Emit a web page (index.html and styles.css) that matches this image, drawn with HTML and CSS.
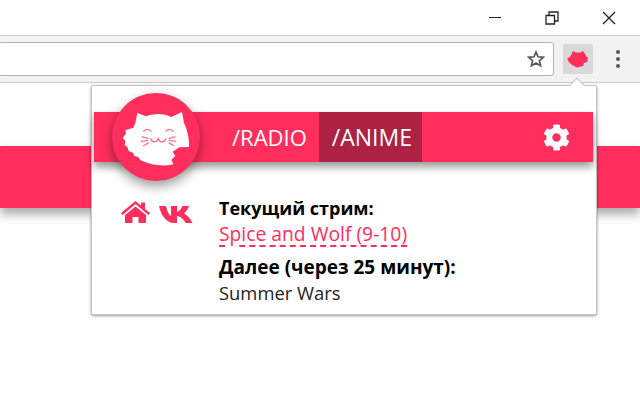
FILE: index.html
```html
<!DOCTYPE html>
<html>
  <head>
    <meta charset="utf-8">
    <title>Anime Radio</title>
    <link rel="stylesheet" href="styles.css">
  </head>
  <body>
    <div class="titlebar">
      <span class="win-min"></span>
      <svg class="win-icon" width="14" height="14" viewBox="0 0 14 14"><path d="M1 4.500h8.500v8.500h-8.500zM4 4.500v-3.500h9v9h-3.500" fill="none" stroke="#222" stroke-width="1.300"/></svg>
      <svg class="win-icon win-close" width="14" height="14" viewBox="0 0 14 14"><path d="M1 1l12 12M13 1l-12 12" stroke="#222" stroke-width="1.300"/></svg>
    </div>
    <div class="toolbar">
      <div class="address">
        <svg width="18" height="18" viewBox="0 0 18 18"><path d="M9 2l2.100 4.800 5.200.5-3.900 3.400 1.200 5.100L9 13.100l-4.600 2.700 1.200-5.100-3.900-3.400 5.200-.5z" fill="none" stroke="#5a5a5a" stroke-width="1.700"/></svg>
      </div>
      <div class="ext-button">
        <svg width="22" height="18" viewBox="0 0 22 18"><path d="M5 3l1-2 3 1.500h4L16 1l1.500 2 2 3.500L21 8l-1 4-3 1-1 3-6 1.500-5-2.500-4-4-.5-3L3 7z" fill="#ff2e5d"/></svg>
      </div>
      <div class="dots"><i></i><i></i><i></i></div>
    </div>
    <div class="page">
      <div class="band"></div>
    </div>

    <div class="popup">
      <span class="arrow"></span>
      <div class="nav">
        <a class="tab">/RADIO</a>
        <a class="tab active">/ANIME</a>
        <svg class="gear" width="27" height="27" viewBox="0 0 512 512"><path fill="#fff" d="M487.400 315.700l-42.600-24.600c4.300-23.200 4.300-47 0-70.200l42.600-24.600c4.900-2.800 7.100-8.600 5.500-14-11.100-35.600-30-67.800-54.700-94.600-3.800-4.100-10-5.100-14.800-2.300L380.800 110c-17.900-15.400-38.500-27.300-60.800-35.100V25.800c0-5.600-3.900-10.500-9.400-11.700-36.700-8.200-74.300-7.800-109.200 0-5.500 1.200-9.400 6.100-9.400 11.700V75c-22.200 7.900-42.800 19.800-60.800 35.100L88.700 85.500c-4.900-2.800-11-1.900-14.800 2.300-24.700 26.700-43.600 58.900-54.700 94.600-1.700 5.400.6 11.200 5.500 14L67.300 221c-4.300 23.200-4.300 47 0 70.200l-42.600 24.600c-4.900 2.800-7.100 8.600-5.500 14 11.100 35.600 30 67.800 54.700 94.600 3.800 4.100 10 5.100 14.800 2.300l42.600-24.600c17.900 15.400 38.500 27.300 60.800 35.100v49.200c0 5.600 3.900 10.500 9.400 11.700 36.700 8.200 74.300 7.800 109.200 0 5.500-1.200 9.400-6.100 9.400-11.700v-49.200c22.200-7.900 42.800-19.800 60.800-35.100l42.600 24.600c4.900 2.800 11 1.900 14.800-2.300 24.700-26.700 43.600-58.900 54.700-94.600 1.500-5.500-.7-11.300-5.600-14.100zM256 336c-44.100 0-80-35.900-80-80s35.900-80 80-80 80 35.900 80 80-35.900 80-80 80z"/></svg>
      </div>
      <div class="logo">
        <svg width="88" height="88" viewBox="6 -6 264 264">
          <path fill="#fff" d="M76 84L82 54L108 64C135 54 160 54 184 66L216 51L222 84C232 105 238 130 237 156L208 157L188 170L196 183L184 194L190 208C160 215 125 212 92 196L84 186L72 182L70 174L56 168L52 156L44 150L46 138L38 128L48 116L46 106L70 98z"/>
          <g fill="none" stroke="#ff6f8f" stroke-width="4">
            <path d="M100 110c6-9 18-9 24 0M166 110c6-9 18-9 24 0"/>
            <path d="M122 130c3 14 18 14 23 1c5 13 20 13 23-1"/>
            <path d="M95 125l20 6M92 139l23-3M100 153l16-10M176 131l20-6M176 136l23 3M176 143l16 10"/>
          </g>
        </svg>
      </div>
      <div class="info">
        <div class="links">
          <svg width="29" height="22" viewBox="0 0 29 22"><path d="M14.500 0L20 4.600V1.500h4v6.400L29 12l-1.600 1.900-12.900-10.800L1.600 13.900 0 12z" fill="#ff2e5d"/><path d="M14.500 5.500L25 14v8h-7.500v-6h-6v6H4v-8z" fill="#ff2e5d"/></svg>
          <svg width="34" height="18" viewBox="0 0 34 18"><path d="M0 1H7C8 6 10 10 12 11V1H18V7C20 6.500 22 4 23.500 1H30C29 4 27 7 25 8.500C28 10 31 13 33.500 18H26.500C25 14.500 22 11.500 18 11V18H15C8 18 2 11 0 1Z" fill="#ff2e5d"/></svg>
        </div>
        <div class="schedule">
          <div class="label">Текущий стрим:</div>
          <div><a class="current">Spice and Wolf (9-10)</a></div>
          <div class="label next">Далее (через 25 минут):</div>
          <div class="title">Summer Wars</div>
        </div>
      </div>
    </div>
  </body>
</html>
```

FILE: styles.css
```css
html, body {
  margin: 0;
  padding: 0;
  height: 400px;
  overflow: hidden;
  background-color: #fff;
  font-family: "Open Sans", sans-serif;
}
.titlebar {
  display: flex;
  justify-content: flex-end;
  align-items: center;
  height: 35px;
  padding-right: 24px;
  box-sizing: border-box;
  gap: 43px;
}
.win-min {
  width: 12px;
  height: 1px;
  background-color: #222;
  margin-right: 1px;
}
.toolbar {
  display: flex;
  align-items: center;
  height: 48px;
  box-sizing: border-box;
  background-color: #f2f2f2;
  border-top: 1px solid #ccc;
  border-bottom: 1px solid #c8c8c8;
}
.address {
  display: flex;
  align-items: center;
  justify-content: flex-end;
  width: 556px;
  height: 34px;
  margin-left: -2px;
  padding-right: 8px;
  box-sizing: border-box;
  background-color: #fff;
  border: 1px solid #b4b4b4;
  border-radius: 3px;
}
.ext-button {
  display: flex;
  align-items: center;
  justify-content: center;
  width: 30px;
  height: 30px;
  margin-left: 9px;
  background-color: #d9d9d9;
  border-radius: 2px;
}
.dots {
  display: flex;
  flex-direction: column;
  gap: 3px;
  margin-left: 23px;
}
.dots i {
  width: 4px;
  height: 4px;
  border-radius: 50%;
  background-color: #5a5a5a;
}
.page {
  padding-top: 63px;
}
.band {
  height: 62px;
  background-color: #ff2e5d;
  box-shadow: 0 6px 10px rgba(0, 0, 0, 0.35);
}
.popup {
  position: absolute;
  left: 91px;
  top: 85px;
  width: 506px;
  height: 230px;
  box-sizing: border-box;
  padding: 26px 3px 0 2px;
  background-color: #fff;
  border: 1px solid #c4c4c4;
  border-radius: 2px;
  box-shadow: 0 1px 3px rgba(0, 0, 0, 0.4);
  color: #222;
  font-size: 18px;
}
.arrow {
  position: absolute;
  left: 479px;
  top: -6px;
  width: 11px;
  height: 11px;
  background-color: #fff;
  border-left: 1px solid #c4c4c4;
  border-top: 1px solid #c4c4c4;
  transform: rotate(45deg);
}
.nav {
  display: flex;
  align-items: stretch;
  height: 50px;
  padding-left: 125px;
  background-color: #ff2e5d;
  box-shadow: 0 5px 8px rgba(0, 0, 0, 0.4);
  color: #fff;
  font-size: 22px;
}
.tab {
  display: flex;
  align-items: center;
  padding: 0 12px 0 13px;
}
.tab.active {
  padding: 0 10px 0 13px;
  background-color: #ad2142;
  font-size: 23px;
}
.gear {
  align-self: center;
  margin-left: auto;
  margin-right: 23px;
}
.logo {
  position: absolute;
  left: 20px;
  top: 7px;
  display: flex;
  width: 88px;
  height: 88px;
  border-radius: 50%;
  background-color: #ff2e5d;
  box-shadow: 0 5px 12px rgba(0, 0, 0, 0.4);
}
.info {
  display: flex;
  padding-top: 33px;
}
.links {
  display: flex;
  align-items: flex-start;
  gap: 9px;
  width: 125px;
  padding-left: 27px;
  padding-top: 6px;
  box-sizing: border-box;
}
.links svg:last-child {
  margin-top: 4px;
}
.schedule {
  line-height: 26px;
}
.label {
  font-weight: 700;
  color: #000;
}
.next {
  margin-top: 7px;
  font-size: 19px;
}
.current {
  color: #ff2e5d;
  font-size: 19.300px;
  text-decoration: underline dashed #ff2e5d 1.500px;
  text-underline-offset: 4px;
}
.title {
  font-size: 18.400px;
}
```
